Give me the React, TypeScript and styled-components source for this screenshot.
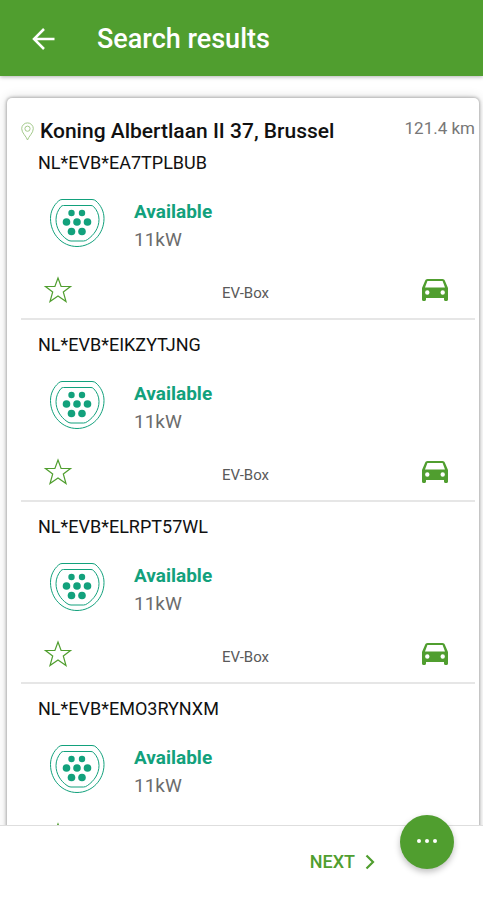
import React from "react";
import styled, { createGlobalStyle } from "styled-components";

const GREEN = "#509e2f";
const TEAL = "#12a17c";

const GlobalStyle = createGlobalStyle`
  *, *::before, *::after { box-sizing: border-box; }
  body { margin: 0; background: #fff; font-family: Roboto, "Liberation Sans", sans-serif; }
  h1, h2, h3, p, ul { margin: 0; padding: 0; }
`;

const Page = styled.div`
  height: 100vh;
  display: flex;
  flex-direction: column;
  background: #fff;
  color: #111;
`;

const TopBar = styled.header`
  flex: none;
  display: flex;
  align-items: center;
  gap: 38px;
  height: 76px;
  padding: 2px 28px 0;
  background: ${GREEN};
  color: #fff;
  box-shadow: 0 1px 4px rgba(0, 0, 0, 0.3);
  z-index: 1;
`;

const IconButton = styled.button`
  display: flex;
  align-items: center;
  justify-content: center;
  flex: none;
  padding: 0;
  border: 0;
  background: none;
  color: ${GREEN};
  cursor: pointer;
`;

const BackButton = styled(IconButton)`
  width: 31px;
  height: 32px;
  color: #fff;
`;

const Title = styled.h1`
  font-size: 27px;
  line-height: 32px;
  font-weight: 500;
`;

const Results = styled.main`
  flex: 1;
  min-height: 0;
  overflow-y: auto;
  scrollbar-width: none;
  padding: 22px 4px 0 7px;
`;

const Card = styled.section`
  min-height: 100%;
  padding: 21px 4px 0 14px;
  border-radius: 5px;
  background: #fff;
  box-shadow: 0 0 3px 1px rgba(0, 0, 0, 0.26), 0 0 12px rgba(0, 0, 0, 0.16);
`;

const AddressRow = styled.div`
  display: flex;
  align-items: center;
  gap: 6px;
  height: 24px;
`;

const Address = styled.h2`
  flex: 1;
  font-size: 21px;
  line-height: 24px;
  font-weight: 500;
  white-space: nowrap;
`;

const Distance = styled.span`
  align-self: flex-start;
  font-size: 17px;
  line-height: 18px;
  color: #777;
  white-space: nowrap;
`;

const StationList = styled.ul`
  list-style: none;
  padding-top: 10px;
`;

const Station = styled.li`
  padding-bottom: 12px;

  & + & {
    border-top: 2px solid #e6e6e6;
    padding-top: 15px;
  }
`;

const StationId = styled.h3`
  padding-left: 17px;
  font-size: 18px;
  line-height: 20px;
  font-weight: 400;
`;

const Connector = styled.div`
  display: flex;
  align-items: flex-start;
  gap: 29px;
  margin-top: 25px;
  padding-left: 28px;
`;

const Status = styled.p`
  font-size: 19px;
  line-height: 28px;
  font-weight: 700;
  color: ${TEAL};
`;

const Power = styled.p`
  font-size: 19px;
  line-height: 28px;
  color: #6c6c6c;
`;

const Actions = styled.div`
  display: grid;
  grid-template-columns: 1fr auto 1fr;
  align-items: center;
  justify-items: start;
  height: 32px;
  margin-top: 20px;
  padding: 0 27px 0 22px;

  & > :last-child { justify-self: end; }
`;

const Operator = styled.span`
  padding-top: 6px;
  font-size: 15px;
  line-height: 20px;
  color: #5a5a5a;
`;

const Footer = styled.footer`
  position: relative;
  flex: none;
  display: flex;
  justify-content: flex-end;
  height: 75px;
  padding: 21px 108px 0 0;
  background: #fff;
  border-top: 1px solid #dedede;
`;

const NextButton = styled(IconButton)`
  gap: 10px;
  height: 30px;
  font: 500 18px/30px Roboto, "Liberation Sans", sans-serif;
`;

const MoreButton = styled(IconButton)`
  position: absolute;
  top: -11px;
  right: 29px;
  width: 54px;
  height: 54px;
  border-radius: 50%;
  background: ${GREEN};
  box-shadow: 0 3px 6px rgba(0, 0, 0, 0.25);
`;

const BackIcon = () => (
  <svg width="24" height="24" viewBox="0 0 24 24" fill="none" stroke="currentColor" strokeWidth="2.5" aria-hidden="true">
    <path d="M22.5 12H3M12 2 2 12l10 10" />
  </svg>
);

const PinIcon = () => (
  <svg width="13" height="19" viewBox="0 0 13 19" fill="none" stroke="#a3c98a" strokeWidth="1" aria-hidden="true">
    <path d="M6.5 18C5.5 14.5.7 11 .7 6.7a5.8 5.8 0 0 1 11.6 0C12.3 11 7.5 14.5 6.5 18Z" />
    <circle cx="6.5" cy="6.7" r="2.6" />
  </svg>
);

const PINS = [[22.5, 15], [33, 15], [17.5, 24], [28, 24], [38.5, 24], [22.5, 33.5], [33, 33.5]];

const PlugIcon = () => (
  <svg width="56" height="52" viewBox="0 0 56 52" fill="none" stroke={TEAL} aria-hidden="true">
    <path d="M13 1.500H43Q45.500 1.500 47 3C52 7.500 55 13.500 55 20.500 55 36 43 48.500 28 48.500S1.500 36 1.500 20.500C1.500 13.500 4.500 7.500 9.500 3Q11 1.500 13 1.500Z" />
    <path d="M14.500 7.500H42Q43.500 7.500 44.500 8.500C48 12 50 16.500 50 21.500 50 30 45 37 38.500 41.500Q36.500 43 34.500 43H22Q20 43 18 41.500C11.500 37 7 30 7 21.500 7 16.500 9 12 12 8.500Q13 7.500 14.500 7.500Z" />
    <g fill={TEAL} stroke="none">
      {PINS.map(([x, y]) => (
        <circle key={`${x}-${y}`} cx={x} cy={y} r={y < 20 ? 3.2 : 3.8} />
      ))}
    </g>
  </svg>
);

const StarIcon = () => (
  <svg width="30" height="28" viewBox="0 0 30 28" fill="none" stroke="currentColor" strokeWidth="1.2" aria-hidden="true">
    <path d="M15 2 18.100 10.500H27.500L20.300 16 23 25.500 15 20 7 25.500 9.700 16 2.500 10.500H11.900Z" />
  </svg>
);

const CarIcon = () => (
  <svg width="26" height="22" viewBox="0 0 26 22" fill="currentColor" aria-hidden="true">
    <path fillRule="evenodd" d="M5.500 0H20.500C21.700 0 22.500.7 22.900 1.800L26 9V20.500C26 21.400 25.400 22 24.500 22H23.500C22.600 22 22 21.400 22 20.500V19H4V20.500C4 21.400 3.400 22 2.500 22H1.500C.6 22 0 21.400 0 20.500V9L3.100 1.800C3.500.7 4.300 0 5.500 0ZM5.400 2 3 8.500H23L20.600 2ZM5.300 11.300a2.200 2.200 0 1 0 0 4.400 2.200 2.200 0 0 0 0-4.400ZM20.700 11.300a2.200 2.200 0 1 0 0 4.400 2.200 2.200 0 0 0 0-4.400Z" />
  </svg>
);

const ChevronIcon = () => (
  <svg width="10" height="16" viewBox="0 0 10 16" fill="none" stroke="currentColor" strokeWidth="2.2" aria-hidden="true">
    <path d="m1.500 1.500 6.500 6.500-6.500 6.500" />
  </svg>
);

const DotsIcon = () => (
  <svg width="22" height="6" viewBox="0 0 22 6" fill="#fff" aria-hidden="true">
    <circle cx="3" cy="2" r="2" />
    <circle cx="11" cy="2" r="2" />
    <circle cx="19" cy="2" r="2" />
  </svg>
);

const stations = [
  "NL*EVB*EA7TPLBUB",
  "NL*EVB*EIKZYTJNG",
  "NL*EVB*ELRPT57WL",
  "NL*EVB*EMO3RYNXM",
];

export default function App() {
  return (
    <Page>
      <GlobalStyle />
      <TopBar>
        <BackButton type="button" aria-label="Back"><BackIcon /></BackButton>
        <Title>Search results</Title>
      </TopBar>
      <Results>
        <Card>
          <AddressRow>
            <PinIcon />
            <Address>Koning Albertlaan II 37, Brussel</Address>
            <Distance>121.4 km</Distance>
          </AddressRow>
          <StationList>
            {stations.map((id) => (
              <Station key={id}>
                <StationId>{id}</StationId>
                <Connector>
                  <PlugIcon />
                  <div>
                    <Status>Available</Status>
                    <Power>11kW</Power>
                  </div>
                </Connector>
                <Actions>
                  <IconButton type="button" aria-label={`Add ${id} to favourites`}><StarIcon /></IconButton>
                  <Operator>EV-Box</Operator>
                  <IconButton type="button" aria-label={`Navigate to ${id}`}><CarIcon /></IconButton>
                </Actions>
              </Station>
            ))}
          </StationList>
        </Card>
      </Results>
      <Footer>
        <NextButton type="button">NEXT <ChevronIcon /></NextButton>
        <MoreButton type="button" aria-label="More options"><DotsIcon /></MoreButton>
      </Footer>
    </Page>
  );
}
